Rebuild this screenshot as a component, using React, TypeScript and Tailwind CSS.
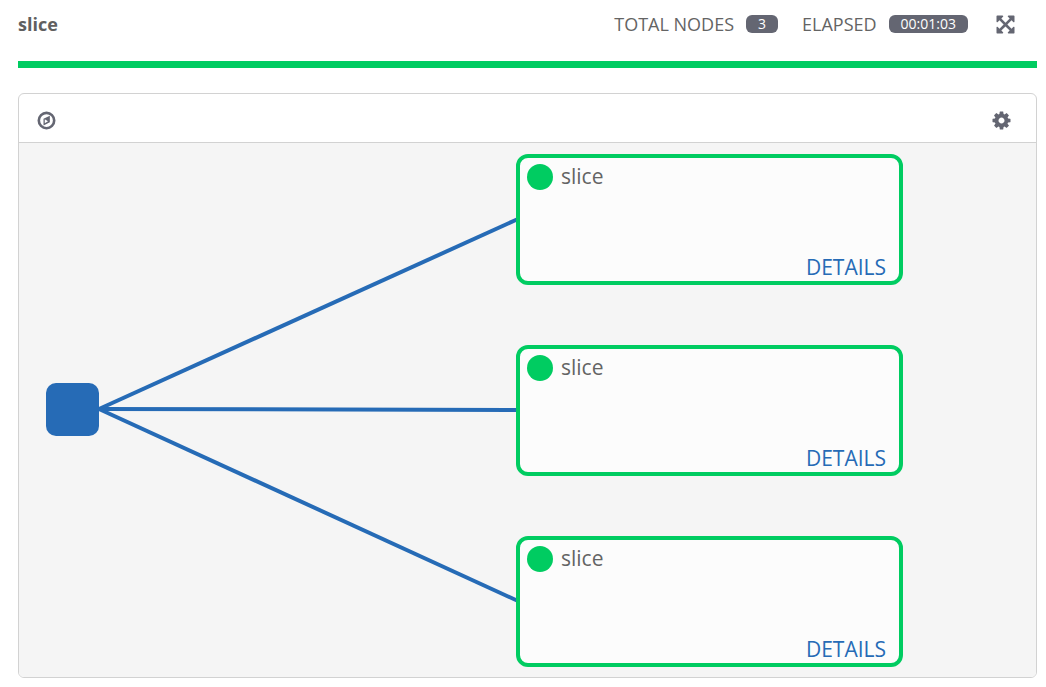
import React from "react";

type IconProps = { paths: string };

const EXPAND =
  "M1411 541l-355 355 355 355 144-144q29-31 70-14 39 17 39 59v448q0 26-19 45t-45 19h-448q-42 0-59-40-17-39 14-69l144-144-355-355-355 355 144 144q31 30 14 69-17 40-59 40h-448q-26 0-45-19t-19-45v-448q0-42 40-59 39-17 69 14l144 144 355-355-355-355-144 144q-19 19-45 19-12 0-24-5-40-17-40-59v-448q0-26 19-45t45-19h448q42 0 59 40 17 39-14 69l-144 144 355 355 355-355-144-144q-31-30-14-69 17-40 59-40h448q26 0 45 19t19 45v448q0 42-39 59-13 5-25 5-26 0-45-19z";
const COG =
  "M1152 896q0-106-75-181t-181-75-181 75-75 181 75 181 181 75 181-75 75-181zm512-109v222q0 12-8 23t-20 13l-185 28q-19 54-39 91 35 50 107 138 10 12 10 25t-9 23q-27 37-99 108t-94 71q-12 0-26-9l-138-108q-44 23-91 38-16 136-29 186-7 28-36 28h-222q-14 0-24.5-8.5t-11.5-21.5l-28-184q-49-16-90-37l-141 107q-10 9-25 9-14 0-25-11-126-114-165-168-7-10-7-23 0-12 8-23 15-21 51-66.5t54-70.5q-27-50-41-99l-183-27q-13-2-21-12.5t-8-23.5v-222q0-12 8-23t19-13l186-28q14-46 39-92-40-57-107-138-10-12-10-24 0-10 9-23 26-36 98.5-107.5t94.5-71.5q13 0 26 10l138 107q44-23 91-38 16-136 29-186 7-28 36-28h222q14 0 24.5 8.5t11.5 21.5l28 184q49 16 90 37l142-107q9-9 24-9 13 0 25 10 129 119 165 170 7 8 7 22 0 12-8 23-15 21-51 66.5t-54 70.5q26 50 41 98l183 28q13 2 21 12.5t8 23.5z";
const COMPASS =
  "M896 128a768 768 0 1 0 0 1536a768 768 0 1 0 0-1536zM896 352a544 544 0 1 1 0 1088a544 544 0 1 1 0-1088zM1180 480v570l-540 262v-570zM748 1125l276-165-276-165z";

function Icon({ paths }: IconProps) {
  return (
    <svg viewBox="0 0 1792 1792" className="size-[21px]" fill="currentColor" fillRule="evenodd" aria-hidden="true">
      <path d={paths} />
    </svg>
  );
}

function Stat({ label, value }: { label: string; value: string }) {
  return (
    <div className="flex items-center gap-3">
      <span className="text-[18px] leading-6">{label}</span>
      <span className="rounded-md bg-[#646672] px-3 text-[14px] leading-[18px] text-white">{value}</span>
    </div>
  );
}

const nodes = [
  { name: "slice", place: "top-[11px]", port: 76 },
  { name: "slice", place: "top-[202px]", port: 267 },
  { name: "slice", place: "top-[393px]", port: 458 },
];

export default function App() {
  return (
    <div className="flex flex-col pr-[9px] pl-[18px] font-['Open_Sans',sans-serif] text-[#646464]">
      <header className="flex h-[61px] items-start justify-between pt-3">
        <h1 className="text-[18px] leading-6 font-bold text-[#606060]">slice</h1>
        <div className="flex items-center gap-6 pr-[21px]">
          <Stat label="TOTAL NODES" value="3" />
          <Stat label="ELAPSED" value="00:01:03" />
          <button type="button" aria-label="Full screen" className="ml-[3px] text-[#646672]">
            <Icon paths={EXPAND} />
          </button>
        </div>
      </header>
      <div className="h-[7px] bg-[#00cc61]" />
      <main className="mt-[25px] overflow-hidden rounded-md border border-[#d2d2d2]">
        <div className="flex h-[49px] items-center justify-between border-b border-[#d2d2d2] pt-[5px] pr-6 pl-[17px] text-[#646672]">
          <button type="button" aria-label="Navigator">
            <Icon paths={COMPASS} />
          </button>
          <button type="button" aria-label="Settings">
            <Icon paths={COG} />
          </button>
        </div>
        <div className="relative h-[534px] overflow-auto bg-[#f5f5f5]">
          <svg className="absolute top-0 left-0" width="510" height="534" aria-hidden="true">
            {nodes.map((n) => (
              <line key={n.port} x1="80" y1="266" x2="499" y2={n.port} stroke="#266bb6" strokeWidth="4" />
            ))}
          </svg>
          <div className="absolute top-[240px] left-[27px] size-[53px] rounded-[10px] bg-[#266bb6]" />
          {nodes.map((n) => (
            <article
              key={n.port}
              className={`absolute left-[497px] flex h-[131px] w-[387px] flex-col justify-between rounded-xl border-4 border-[#00cc61] bg-[#fcfcfc] ${n.place}`}
            >
              <div className="flex items-start gap-2 pt-[6px] pl-[7px]">
                <span className="size-[26px] rounded-full bg-[#00cc61]" />
                <h2 className="text-[21px] leading-6">{n.name}</h2>
              </div>
              <button type="button" className="mr-[13px] self-end text-[21px] leading-7 text-[#266bb6]">
                DETAILS
              </button>
            </article>
          ))}
        </div>
      </main>
    </div>
  );
}
